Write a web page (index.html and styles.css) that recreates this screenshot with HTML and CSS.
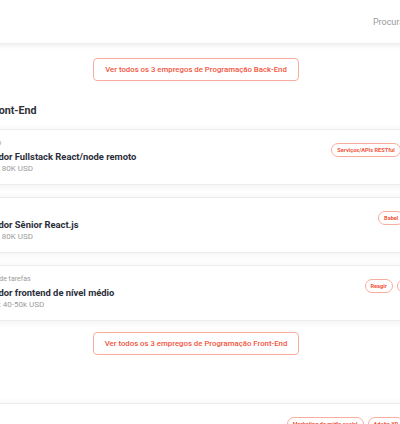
FILE: index.html
```html
<!DOCTYPE html>
<html>
<head>
  <meta charset="UTF-8">
  <title>Empregos de Programação</title>
  <link rel="stylesheet" href="styles.css">
</head>
<body>
  <div class="page">
    <header class="topbar">
      <nav class="nav">
        <a href="#">Procurar</a>
        <a href="#">Entrar</a>
      </nav>
    </header>

    <main class="content">
      <div class="more">
        <a class="more-btn" href="#">Ver todos os 3 empregos de Programação Back-End</a>
      </div>

      <section class="category">
        <h2>Programação Front-End</h2>
        <ul class="jobs">
          <li class="job">
            <div class="job-info">
              <span class="company">Trabalho remoto</span>
              <h3>Desenvolvedor Fullstack React/node remoto</h3>
              <span class="salary">Salário: 60K – 80K USD</span>
            </div>
            <div class="tags">
              <span class="tag">Serviços/APIs RESTful</span>
              <span class="tag">Node.js</span>
            </div>
          </li>
          <li class="job">
            <div class="job-info">
              <span class="company">Acme</span>
              <h3>Desenvolvedor Sênior React.js</h3>
              <span class="salary">Salário: 60K – 80K USD</span>
            </div>
            <div class="tags">
              <span class="tag">Babel</span>
              <span class="tag">Vue.js</span>
            </div>
          </li>
          <li class="job">
            <div class="job-info">
              <span class="company">Gerenciamento de tarefas</span>
              <h3>Desenvolvedor frontend de nível médio</h3>
              <span class="salary">Salário médio: 40-50k USD</span>
            </div>
            <div class="tags">
              <span class="tag">Reagir</span>
              <span class="tag">TypeScript</span>
            </div>
          </li>
        </ul>
        <div class="more">
          <a class="more-btn" href="#">Ver todos os 3 empregos de Programação Front-End</a>
        </div>
      </section>

      <section class="category">
        <h2>Design</h2>
        <ul class="jobs">
          <li class="job">
            <div class="job-info">
              <span class="company">Estúdio</span>
              <h3>Designer de produto</h3>
              <span class="salary">Salário: 50K USD</span>
            </div>
            <div class="tags">
              <span class="tag">Marketing de mídia social</span>
              <span class="tag">Adobe XD</span>
              <span class="tag">Figma</span>
            </div>
          </li>
        </ul>
      </section>
    </main>
  </div>
</body>
</html>
```

FILE: styles.css
```css
/* Corpo da página */
body {
  margin: 0;
  font-family: Roboto, "Liberation Sans", Arial, sans-serif;
  background-color: #fff;
  overflow: hidden;
}

.page {
  width: 640px;
  margin-left: -124px;
}

/* Barra do topo */
.topbar {
  height: 43px;
  background-color: #fff;
  box-shadow: 0 2px 5px rgba(0, 0, 0, 0.09);
  display: flex;
  align-items: center;
  justify-content: flex-end;
  position: relative;
}

.nav {
  display: flex;
  gap: 18px;
  margin-right: 67px;
}

.nav a {
  color: #9a9a9a;
  font-size: 9px;
  text-decoration: none;
}

.content {
  padding: 15px 24px 0;
}

/* Botão "ver todos" */
.more {
  display: flex;
  justify-content: center;
}

.more-btn {
  display: inline-flex;
  align-items: center;
  height: 21px;
  padding: 0 11px;
  border: 1px solid #f9ad9f;
  border-radius: 4px;
  color: #f2553e;
  font-size: 7.8px;
  font-weight: 500;
  text-decoration: none;
}

/* Categorias */
.category h2 {
  margin: 22px 0 10px 22px;
  font-size: 10.7px;
  line-height: 16px;
  color: #2f3136;
}

.jobs {
  list-style: none;
  margin: 0;
  padding: 0;
  display: flex;
  flex-direction: column;
  gap: 12px;
}

.job {
  display: flex;
  justify-content: space-between;
  align-items: flex-start;
  padding: 8px 55px 10px 49px;
  border: 1px solid #ececec;
  box-shadow: 0 1px 8px rgba(0, 0, 0, 0.06);
  background-color: #fff;
}

.job-info {
  display: flex;
  flex-direction: column;
}

.company {
  font-size: 7px;
  line-height: 10px;
  color: #9b9b9b;
}

.job h3 {
  margin: 2px 0 0;
  font-size: 9.4px;
  line-height: 13px;
  color: #2b2e3a;
}

.salary {
  margin-top: 1px;
  font-size: 8px;
  line-height: 10px;
  color: #9b9b9b;
}

/* Etiquetas */
.tags {
  display: flex;
  gap: 4px;
  margin-top: 5px;
}

.tag {
  display: inline-flex;
  align-items: center;
  height: 12px;
  padding: 0 5px;
  border: 1px solid #f9ad9f;
  border-radius: 8px;
  color: #f2553e;
  font-size: 5.6px;
  font-weight: 700;
  white-space: nowrap;
}

.category .more {
  margin-top: 11px;
}
```
